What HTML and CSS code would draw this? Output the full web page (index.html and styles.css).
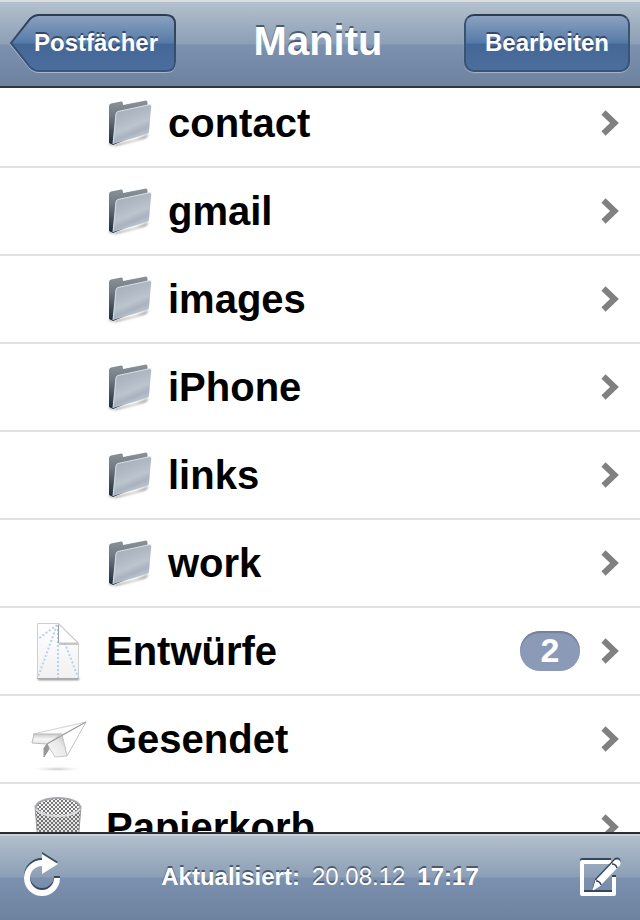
FILE: index.html
```html
<!DOCTYPE html>
<html lang="de">
<head>
<meta charset="utf-8">
<meta name="viewport" content="width=device-width">
<title>Manitu</title>
<link rel="stylesheet" href="styles.css">
</head>
<body>
<svg class="defs" aria-hidden="true">
  <defs>
    <linearGradient id="folder-back" x1="0" y1="0" x2="0" y2="1"><stop offset="0" stop-color="#8b939a"/><stop offset=".35" stop-color="#6f7a83"/><stop offset="1" stop-color="#1c2838"/></linearGradient>
    <linearGradient id="folder-front" x1="0" y1="0" x2=".4" y2="1"><stop offset="0" stop-color="#9fa8b4"/><stop offset=".4" stop-color="#b0b8c4"/><stop offset=".65" stop-color="#bcc4ce"/><stop offset=".8" stop-color="#a9b2bf"/><stop offset="1" stop-color="#c4cbd3"/></linearGradient>
    <filter id="soft" x="-20%" y="-100%" width="140%" height="300%"><feGaussianBlur stdDeviation="1"/></filter>
    <linearGradient id="paper" x1="0" y1="0" x2="0" y2="1"><stop offset="0" stop-color="#fff"/><stop offset="1" stop-color="#f1f1f1"/></linearGradient>
    <linearGradient id="wing" x1="0" y1="0" x2="0" y2="1"><stop offset="0" stop-color="#c8c8c8"/><stop offset=".5" stop-color="#f6f6f6"/><stop offset="1" stop-color="#e6e6e6"/></linearGradient>
    <linearGradient id="keel" x1="0" y1="1" x2="1" y2="0"><stop offset="0" stop-color="#fafafa"/><stop offset=".6" stop-color="#e8e8e8"/><stop offset="1" stop-color="#bdbdbd"/></linearGradient>
    <radialGradient id="ground"><stop offset="0" stop-color="#c8c8c8"/><stop offset="1" stop-color="#fff" stop-opacity="0"/></radialGradient>
    <pattern id="mesh" width="4" height="4" patternUnits="userSpaceOnUse"><path d="M0 0l4 4M4 0L0 4" stroke="#555" stroke-width=".8"/></pattern>
    <linearGradient id="gloss" x1="0" y1="0" x2="0" y2="1"><stop offset="0" stop-color="#8ba2c0"/><stop offset=".5" stop-color="#557aa8"/><stop offset=".52" stop-color="#446796"/><stop offset="1" stop-color="#4b6e9e"/></linearGradient>
    <linearGradient id="rim" x1="0" y1="0" x2="0" y2="1"><stop offset="0" stop-color="#2d3d50"/><stop offset="1" stop-color="#3a567d"/></linearGradient>
    <symbol id="folder" viewBox="0 0 48 52">
      <path d="M4 46l4 2 22-5 14-6-3 4-30 8-7-1z" fill="#555" opacity=".6" filter="url(#soft)"/>
      <path d="M4 9q0-2 2-2.500L16 4.500q1.500-.3 1.700 1L18 8 41 3.500q1.500 0 1.500 2V34L8 48l-4-2z" fill="url(#folder-back)"/>
      <path d="M11 17q.2-2 2-2.500L44.500 7.700q2-.3 1.700 1.500L44 34.500q-.3 1.800-2 2.500L8 47z" fill="url(#folder-front)"/>
      <path d="M8 47l3-30q.2-2 2-2.500L44.500 7.700q2-.3 1.700 1.500" fill="none" stroke="#dce1e6" stroke-width="1"/>
    </symbol>
    <symbol id="chevron" viewBox="0 0 18 26"><path d="M2.500 2.500L13.500 13 2.500 23.500" fill="none" stroke="#808080" stroke-width="6"/></symbol>
    <g id="reload-shape"><path d="M39 24A15 15 0 1 1 24 9" fill="none" stroke="currentColor" stroke-width="6"/><path d="M24 0v20l16-10z" fill="currentColor"/></g>
    <g id="compose-shape"><path d="M33 8H4v32h32V23" fill="none" stroke="currentColor" stroke-width="4" stroke-linejoin="round"/></g>
    <g id="pencil-shape"><path d="M15 36l3-10 5 5z" fill="currentColor" stroke="currentColor" stroke-linejoin="round"/><path d="M21 28L39 9" stroke="currentColor" stroke-width="7"/><circle cx="39" cy="9" r="3.500" fill="currentColor"/></g>
  </defs>
</svg>
<div class="screen">
  <header class="bar top">
    <button class="btn back" type="button"><svg class="shape" viewBox="0 0 166 58" preserveAspectRatio="none" aria-hidden="true"><path d="M1 30.500L20 6Q25 2 29 2H156q9 0 9 9v38q0 9-9 9H29q-5 0-9-4z" fill="none" stroke="#a8b7cb" stroke-width="2"/><path d="M1 29L20 5Q24 1 29 1H156q9 0 9 9v38q0 9-9 9H29q-5 0-9-4z" fill="url(#gloss)" stroke="url(#rim)" stroke-width="2"/></svg><span>Postfächer</span></button>
    <h1>Manitu</h1>
    <button class="btn edit" type="button">Bearbeiten</button>
  </header>
  <main>
    <ul class="list">
      <li><a class="row sub" href="#contact"><svg class="folder" aria-hidden="true"><use href="#folder"/></svg><span class="name">contact</span><svg class="chevron" aria-hidden="true"><use href="#chevron"/></svg></a></li>
      <li><a class="row sub" href="#gmail"><svg class="folder" aria-hidden="true"><use href="#folder"/></svg><span class="name">gmail</span><svg class="chevron" aria-hidden="true"><use href="#chevron"/></svg></a></li>
      <li><a class="row sub" href="#images"><svg class="folder" aria-hidden="true"><use href="#folder"/></svg><span class="name">images</span><svg class="chevron" aria-hidden="true"><use href="#chevron"/></svg></a></li>
      <li><a class="row sub" href="#iphone"><svg class="folder" aria-hidden="true"><use href="#folder"/></svg><span class="name">iPhone</span><svg class="chevron" aria-hidden="true"><use href="#chevron"/></svg></a></li>
      <li><a class="row sub" href="#links"><svg class="folder" aria-hidden="true"><use href="#folder"/></svg><span class="name">links</span><svg class="chevron" aria-hidden="true"><use href="#chevron"/></svg></a></li>
      <li><a class="row sub" href="#work"><svg class="folder" aria-hidden="true"><use href="#folder"/></svg><span class="name">work</span><svg class="chevron" aria-hidden="true"><use href="#chevron"/></svg></a></li>
      <li><a class="row" href="#drafts"><svg class="icon" viewBox="0 0 60 60" aria-hidden="true">
        <path d="M8 57h41v2H8z" fill="#777" filter="url(#soft)"/>
        <path d="M7.500 2.500H29L48.500 22v35.500h-41z" fill="url(#paper)" stroke="#cfcfcf"/>
        <path d="M7 57.500h42" stroke="#aaa"/>
        <path d="M27 4L8 18M27 4L8 56M28 4v53M29 7l19 49" fill="none" stroke="#b5d0f2" stroke-width="2" stroke-dasharray="2 2"/>
        <path d="M29 23h19" stroke="#aaa" stroke-width="2" opacity=".6"/>
        <path d="M28.500 3v19H48z" fill="#fff" stroke="#c4c4c4"/><path d="M28.500 4v18" stroke="#8d9db2"/>
      </svg><span class="name">Entwürfe</span><span class="badge">2</span><svg class="chevron" aria-hidden="true"><use href="#chevron"/></svg></a></li>
      <li><a class="row" href="#sent"><svg class="icon" viewBox="0 0 60 60" aria-hidden="true">
        <ellipse cx="27" cy="60" rx="28" ry="3" fill="url(#ground)"/>
        <path d="M3 25L56 13 32 26z" fill="#fcfcfc" stroke="#d2d2d2"/>
        <path d="M56 13L37 47l-5-21z" fill="#fff" stroke="#c4c4c4"/>
        <path d="M4 25h28L17 35 2 34z" fill="url(#wing)" stroke="#bbb"/>
        <path d="M32 26L17 35l8 13 12-1z" fill="url(#keel)" stroke="#c8c8c8"/>
        <path d="M17 35l-3 4v9l5-8z" fill="#999" stroke="#999"/>
        <path d="M56 13L17 35" stroke="#999"/>
      </svg><span class="name">Gesendet</span><svg class="chevron" aria-hidden="true"><use href="#chevron"/></svg></a></li>
      <li><a class="row" href="#trash"><svg class="icon" viewBox="0 0 60 60" aria-hidden="true">
        <path d="M5 9l4 50q20 5 38 0l4-50" fill="#e4e4e4"/>
        <path d="M5 9l4 50q20 5 38 0l4-50q-22 18-46 0" fill="url(#mesh)" stroke="#999"/>
        <ellipse cx="28" cy="10" rx="22" ry="9" fill="#f5f5f5"/>
        <ellipse cx="28" cy="10" rx="22" ry="9" fill="url(#mesh)" stroke="#aaa6ad" stroke-width="2"/>
        <path d="M6 12q5 7 22 7t22-7" fill="none" stroke="#dddbdf" stroke-width="2"/>
      </svg><span class="name">Papierkorb</span><svg class="chevron" aria-hidden="true"><use href="#chevron"/></svg></a></li>
    </ul>
  </main>
  <footer class="bar bottom">
    <button class="tool" type="button" aria-label="Aktualisieren"><svg viewBox="0 0 44 46" aria-hidden="true"><use href="#reload-shape" class="shade" y="-2"/><use href="#reload-shape"/></svg></button>
    <p class="status"><strong>Aktualisiert:</strong><span>20.08.12</span><strong>17:17</strong></p>
    <button class="tool" type="button" aria-label="Verfassen"><svg viewBox="0 0 44 46" aria-hidden="true"><use href="#compose-shape" class="shade" y="-2"/><use href="#compose-shape"/><use href="#pencil-shape" class="shade" y="-2"/><use href="#pencil-shape"/><path d="M18 27q4 0 5 4M34 10q4 0 5 4" fill="none" stroke="#34475e" stroke-width="1.500"/></svg></button>
  </footer>
</div>
</body>
</html>
```

FILE: styles.css
```css
* { box-sizing: border-box; }

body {
  margin: 0;
  background: #fff;
  font-family: "Liberation Sans", Helvetica, Arial, sans-serif;
}

.defs { position: absolute; width: 0; height: 0; }

.screen {
  display: flex;
  flex-direction: column;
  height: 100vh;
}

.bar {
  display: flex;
  flex: none;
  align-items: center;
  justify-content: space-between;
  height: 88px;
  color: #fff;
  text-shadow: 0 -2px 0 #4b5b70;
  background: linear-gradient(#b4c0cd 0%, #8c9fb6 50%, #7c91af 51%, #6c829f 100%);
}

.top {
  padding: 0 10px 2px;
  border-top: 2px solid #d9dedf;
  border-bottom: 2px solid #2d3642;
}

.bottom {
  padding: 0 18px;
  border-top: 2px solid #2b2d30;
  box-shadow: inset 0 2px 0 #cbd2da;
}

h1 {
  margin: 0;
  padding: 0 4px 4px 0;
  font-size: 40px;
  line-height: 48px;
}

.btn {
  position: relative;
  width: 166px;
  height: 58px;
  padding: 0;
  border: 0;
  color: inherit;
  font: bold 24px/30px "Liberation Sans", Helvetica, Arial, sans-serif;
  text-shadow: 0 -2px 0 #34496a;
}

.back {
  padding-left: 6px;
  background: none;
}

.back span { position: relative; }

.shape {
  position: absolute;
  inset: 0;
  width: 100%;
  height: 100%;
  overflow: visible;
}

.edit {
  border: 2px solid #3a5273;
  border-top-color: #2d3d50;
  border-radius: 10px;
  background: linear-gradient(#8ba2c0, #557aa8 50%, #446796 52%, #4b6e9e);
  box-shadow: 0 1px 1px #a8b7cb;
}

main {
  flex: 1;
  min-height: 0;
  overflow: hidden;
}

/* The list rests slightly scrolled under the title bar. */
.list {
  margin: -8px 0 0;
  padding: 0;
  list-style: none;
}

.row {
  display: flex;
  align-items: center;
  height: 88px;
  padding: 0 21px 0 30px;
  border-bottom: 2px solid #e0e0e0;
  color: #000;
  font-size: 40px;
  font-weight: bold;
  line-height: 48px;
  text-decoration: none;
}

.sub { padding-left: 105px; }

.folder { width: 48px; height: 52px; margin-right: 15px; }

.icon { width: 60px; height: 60px; margin-right: 16px; overflow: visible; }

.name { flex: 1; }

.chevron { width: 18px; height: 26px; }

.badge {
  width: 60px;
  height: 40px;
  margin-right: 21px;
  border-radius: 20px;
  color: #fff;
  background: #8b9ab6;
  box-shadow: inset 0 2px 1px #73819b;
  font-size: 34px;
  line-height: 38px;
  text-align: center;
}

.tool {
  width: 44px;
  height: 46px;
  padding: 0;
  border: 0;
  color: #fff;
  background: none;
}

.tool svg { display: block; width: 44px; height: 46px; overflow: visible; }

.shade { color: #34475e; }

.status {
  display: flex;
  gap: 12px;
  margin: 0;
  font-size: 24px;
  line-height: 30px;
}
```
